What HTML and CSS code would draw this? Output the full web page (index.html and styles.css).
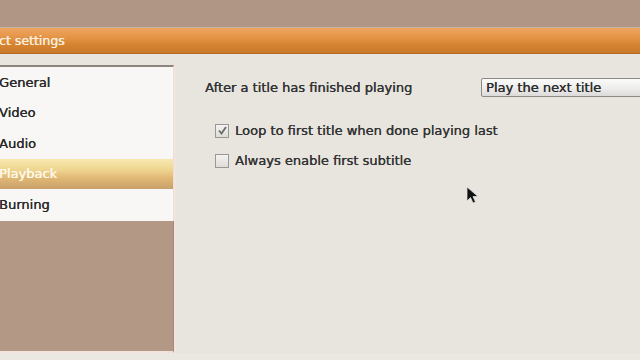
FILE: index.html
```html
<!DOCTYPE html>
<html>
<head>
<meta charset="utf-8">
<link rel="stylesheet" href="styles.css">
</head>
<body>
<div class="screen">
  <div class="topbar"></div>
  <div class="titlebar"><span class="title">ct settings</span></div>
  <div class="window">
    <div class="sidebar">
      <ul class="nav">
        <li class="nav-item">General</li>
        <li class="nav-item">Video</li>
        <li class="nav-item">Audio</li>
        <li class="nav-item active">Playback</li>
        <li class="nav-item">Burning</li>
      </ul>
      <div class="filler"></div>
    </div>
    <div class="content">
      <div class="row">
        <span class="label">After a title has finished playing</span>
        <div class="select">Play the next title</div>
      </div>
      <div class="checks">
        <label class="check"><span class="box checked"><svg width="11" height="11" viewBox="0 0 11 11"><path d="M2 5.5 L4.5 8.5 L9 2" fill="none" stroke="#6a6a6a" stroke-width="1.8"/></svg></span>Loop to first title when done playing last</label>
        <label class="check"><span class="box"></span>Always enable first subtitle</label>
      </div>
    </div>
  </div>
  <div class="bottomline"></div>
  <svg class="cursor" width="14" height="20" viewBox="0 0 14 20"><path d="M1 1 L1 15 L4.5 11.5 L7 17 L9.5 16 L7 10.5 L12 10.5 Z" fill="#111" stroke="#ddd" stroke-width="0.8"/></svg>
</div>
</body>
</html>
```
FILE: styles.css
```css
* { box-sizing: border-box; }
html, body { margin: 0; padding: 0; }
body {
  width: 640px;
  height: 360px;
  overflow: hidden;
  font-family: "DejaVu Sans", "Liberation Sans", sans-serif;
  background: #e8e5df;
}
.screen {
  position: relative;
  width: 640px;
  height: 360px;
  display: flex;
  flex-direction: column;
}
.topbar {
  height: 28px;
  background: #b09684;
  border-bottom: 1px solid #c9b4a4;
  flex: none;
}
.titlebar {
  height: 26px;
  flex: none;
  background: linear-gradient(#eca660 0%, #e69548 35%, #d3822f 70%, #c97a2c 100%);
  border-bottom: 1px solid #b26a25;
  display: flex;
  align-items: center;
}
.title {
  color: #fbeede;
  font-size: 12.5px;
  margin-left: -1px;
  text-shadow: 0.3px 0 0 #fbeede;
}
.window {
  flex: 1;
  display: flex;
  padding-top: 11px;
  background: #e8e5df;
}
.sidebar {
  width: 176px;
  flex: none;
  display: flex;
  flex-direction: column;
  border-right: 2px solid #f3e3dc;
}
.nav {
  list-style: none;
  margin: 0;
  padding: 0 0 1.5px 0;
  background: #f8f7f5;
  border-top: 2px solid #8e867e;
  border-right: 1px solid #e6e2de;
}
.nav-item {
  height: 30.5px;
  display: flex;
  align-items: center;
  font-size: 13px;
  color: #2a2a2a;
  margin-left: -1px;
  text-shadow: 0.35px 0 0 #2a2a2a;
}
.nav-item.active {
  margin-left: 0;
  text-indent: -1px;
  color: #fff8e8;
  text-shadow: 0.3px 0 0 #fff8e8;
  background: linear-gradient(#f7e8b0 0%, #efd690 35%, #dfb774 65%, #c9a06a 100%);
}
.filler {
  flex: 1;
  background: #b39886;
  border-right: 1px solid #a48a7a;
  border-bottom: 2px solid #f1e2dc;
}
.content {
  flex: 1;
  padding-left: 29px;
}
.row {
  display: flex;
  align-items: center;
  height: 19px;
  margin-top: 13px;
}
.label {
  font-size: 13px;
  color: #333;
  width: 276px;
  flex: none;
  text-shadow: 0.35px 0 0 #333;
}
.select {
  flex: none;
  width: 180px;
  height: 19px;
  border: 1px solid #8d8b88;
  border-radius: 2px;
  background: linear-gradient(#fbfbfa, #ecebea 60%, #dcdbd9);
  font-size: 13px;
  color: #2e2e2e;
  text-shadow: 0.35px 0 0 #2e2e2e;
  padding-left: 4px;
  display: flex;
  align-items: center;
}
.checks {
  display: flex;
  flex-direction: column;
  gap: 17px;
  margin-top: 27px;
  padding-left: 10px;
}
.check {
  display: flex;
  align-items: center;
  height: 13px;
  font-size: 13px;
  color: #333;
  text-shadow: 0.35px 0 0 #333;
}
.box {
  width: 14px;
  height: 14px;
  border: 1px solid #9a9894;
  background: linear-gradient(#f4f3f1, #dedcd8);
  margin-right: 6px;
  display: flex;
  align-items: center;
  justify-content: center;
  flex: none;
}
.bottomline {
  height: 7px;
  flex: none;
  background: #ebe7e1;
}
.cursor {
  position: absolute;
  left: 466px;
  top: 186px;
}
```
